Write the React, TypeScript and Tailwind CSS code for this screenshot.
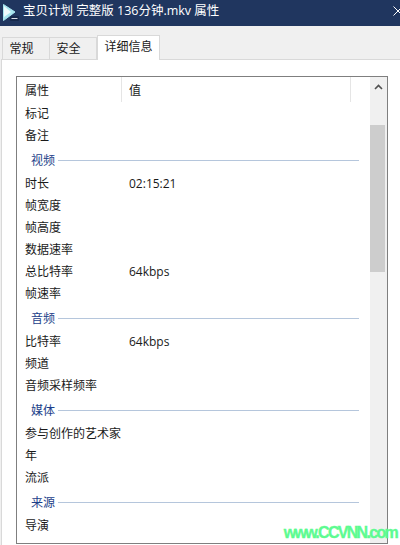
const font = { fontFamily: '"Open Sans", "Noto Sans CJK SC", sans-serif' };

type Row = { name: string; value?: string; group?: boolean };

const rows: Row[] = [
  { name: '标记' },
  { name: '备注' },
  { name: '视频', group: true },
  { name: '时长', value: '02:15:21' },
  { name: '帧宽度' },
  { name: '帧高度' },
  { name: '数据速率' },
  { name: '总比特率', value: '64kbps' },
  { name: '帧速率' },
  { name: '音频', group: true },
  { name: '比特率', value: '64kbps' },
  { name: '频道' },
  { name: '音频采样频率' },
  { name: '媒体', group: true },
  { name: '参与创作的艺术家' },
  { name: '年' },
  { name: '流派' },
  { name: '来源', group: true },
  { name: '导演' },
];

function Tab(props: { label: string; active?: boolean }) {
  if (props.active) {
    return (
      <div className="relative z-10 ml-px h-[25px] w-[63px] border border-b-0 border-[#d9d9d9] bg-white pt-[1px] text-center text-[12px] leading-[20px]">
        {props.label}
      </div>
    );
  }
  return (
    <div className="mt-[2px] -mr-px h-[23px] w-[48px] border border-b-0 border-[#d9d9d9] bg-[#f0f0f0] pl-[6.5px] pt-[1px] text-[12px] leading-[20px]">
      {props.label}
    </div>
  );
}

export default function App() {
  return (
    <div
      className="relative flex h-[545px] w-[400px] flex-col overflow-hidden bg-[#f0f0f0] text-[#1a1a1a]"
      style={font}
    >
      {/* title bar */}
      <div className="flex h-[26px] shrink-0 items-center bg-[#20365f] text-[12.5px] text-white">
        <svg width="18" height="18" viewBox="0 0 18 18" className="ml-[2px] mr-[3px]">
          <path d="M1.5 0.5 L13 8 L1.5 16.5 Z" fill="#a8e6f0" stroke="#a8e6f0" strokeLinejoin="round" />
          <path d="M2 2 L9 8 L2 13 Z" fill="#eefbfd" />
          <rect x="8" y="12" width="9" height="5" rx="1" fill="#16294c" />
          <rect x="9.5" y="14" width="6" height="1" fill="#d5dbe6" />
        </svg>
        <span className="pb-[4px]">宝贝计划 完整版 136分钟.mkv 属性</span>
        <svg width="10" height="10" viewBox="0 0 10 10" className="ml-auto mb-[4px] mr-[-3px]">
          <path d="M0.5 0.5 L9.5 9.5 M9.5 0.5 L0.5 9.5" stroke="#ffffff" strokeWidth="1" />
        </svg>
      </div>

      {/* tabs */}
      <div className="flex h-[34px] shrink-0 items-end bg-[#f0f0f0] pl-[2px]">
        <Tab label="常规" />
        <Tab label="安全" />
        <Tab label="详细信息" active />
      </div>

      {/* page */}
      <div className="-mt-px ml-px flex-1 border-l border-t border-[#d9d9d9] bg-white pl-[14px] pr-[12px] pt-[16px]">
        <div className="flex h-[468px] border border-[#7f7f7f] bg-white">
          <div className="min-w-0 flex-1 overflow-hidden">
            {/* header */}
            <div className="flex h-[25px] text-[12px]">
              <div className="flex w-[105px] items-center border-r border-[#e5e5e5] pl-[8px] pt-[2px]">属性</div>
              <div className="flex w-[229px] items-center border-r border-[#e5e5e5] pl-[7px] pt-[2px]">值</div>
            </div>
            {rows.map((row) =>
              row.group ? (
                <div key={row.name} className="flex h-[26px] items-center pl-[14px] pr-[11px] pt-[2px] text-[12px] text-[#1d3f8a]">
                  <span className="pt-[2px]">{row.name}</span>
                  <div className="ml-[3px] h-px flex-1 bg-[#b5c6dc]" />
                </div>
              ) : (
                <div key={row.name} className="flex h-[22px] items-center pt-[2px] text-[12px]">
                  <div className="w-[104px] shrink-0 whitespace-nowrap pl-[8px]">{row.name}</div>
                  <div className="pl-[8px]">{row.value}</div>
                </div>
              ),
            )}
          </div>

          {/* scrollbar */}
          <div className="flex w-[17px] shrink-0 flex-col bg-[#f0f0f0]">
            <div className="flex h-[17px] items-center justify-center pt-[3px]">
              <svg width="9" height="6" viewBox="0 0 9 6">
                <path d="M1 5 L4.5 1.5 L8 5" fill="none" stroke="#505050" strokeWidth="1.6" />
              </svg>
            </div>
            <div className="mt-[31px] h-[147px] w-[15px] bg-[#cdcdcd]" />
          </div>
        </div>
      </div>

      {/* watermark */}
      <div
        className="absolute bottom-[2px] right-[3px] text-[16px] font-bold leading-[20px] tracking-[-1.7px] text-[#5dfb91] [-webkit-text-stroke:0.4px_#5dfb91]"
        style={{ fontFamily: '"Liberation Sans", sans-serif' }}
      >
        www.CCVNN.com
      </div>
    </div>
  );
}
